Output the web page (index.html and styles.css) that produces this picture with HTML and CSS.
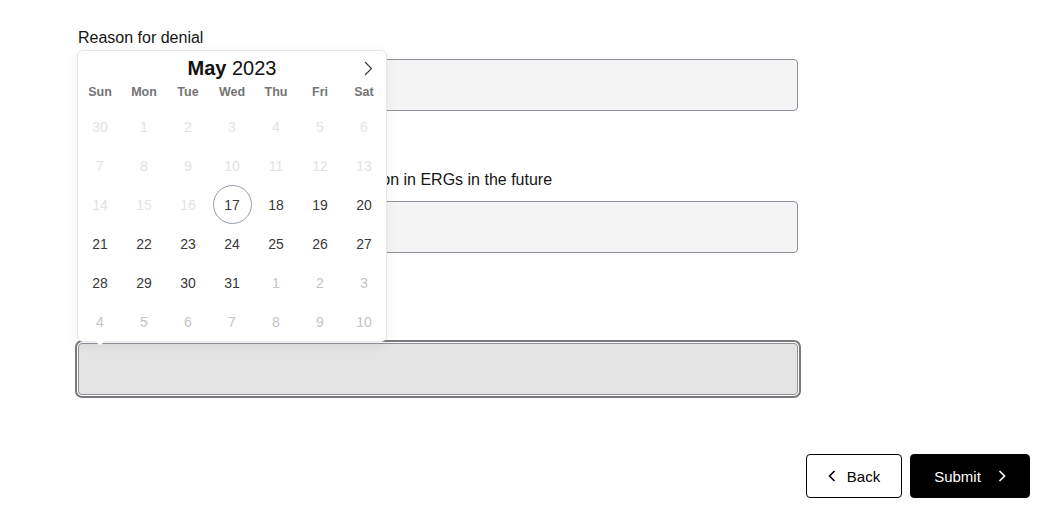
FILE: index.html
```html
<!DOCTYPE html>
<html lang="en">
  <head>
    <meta charset="UTF-8" />
    <meta name="viewport" content="width=device-width, initial-scale=1.0" />
    <title>ERG Request Review</title>
    <link rel="stylesheet" href="styles.css">
  </head>
  <body>
    <div class="form">
      <div class="field">
        <label class="field-label" for="reason">Reason for denial</label>
        <div class="field-input" id="reason"></div>
      </div>

      <div class="field">
        <label class="field-label" for="interest">Level of interest in the continued participation in ERGs in the future</label>
        <div class="field-input" id="interest"></div>
      </div>

      <div class="field">
        <label class="field-label" for="date">Date of decision</label>
        <div class="field-input field-input--active" id="date"></div>
      </div>

      <!-- date picker popup, opened above the date field -->
      <div class="calendar">
        <div class="calendar-header">
          <span class="calendar-month"><b>May</b> 2023</span>
          <span class="calendar-next">
            <svg width="9" height="15" viewBox="0 0 9 15"><path d="M1 1l6.5 6.5L1 14" fill="none" stroke="#3c3c3c" stroke-width="1.2"/></svg>
          </span>
        </div>
        <div class="calendar-weekdays">
          <span>Sun</span><span>Mon</span><span>Tue</span><span>Wed</span><span>Thu</span><span>Fri</span><span>Sat</span>
        </div>
        <div class="calendar-days">
          <span class="day disabled">30</span><span class="day disabled">1</span><span class="day disabled">2</span><span class="day disabled">3</span><span class="day disabled">4</span><span class="day disabled">5</span><span class="day disabled">6</span>
          <span class="day disabled">7</span><span class="day disabled">8</span><span class="day disabled">9</span><span class="day disabled">10</span><span class="day disabled">11</span><span class="day disabled">12</span><span class="day disabled">13</span>
          <span class="day disabled">14</span><span class="day disabled">15</span><span class="day disabled">16</span><span class="day today">17</span><span class="day">18</span><span class="day">19</span><span class="day">20</span>
          <span class="day">21</span><span class="day">22</span><span class="day">23</span><span class="day">24</span><span class="day">25</span><span class="day">26</span><span class="day">27</span>
          <span class="day">28</span><span class="day">29</span><span class="day">30</span><span class="day">31</span><span class="day other">1</span><span class="day other">2</span><span class="day other">3</span>
          <span class="day other">4</span><span class="day other">5</span><span class="day other">6</span><span class="day other">7</span><span class="day other">8</span><span class="day other">9</span><span class="day other">10</span>
        </div>
      </div>
    </div>

    <div class="actions">
      <button class="btn btn-back">
        <svg width="8" height="12" viewBox="0 0 8 12"><path d="M6.5 1L1.5 6l5 5" fill="none" stroke="#000" stroke-width="1.6"/></svg>
        Back
      </button>
      <button class="btn btn-submit">
        Submit
        <svg width="8" height="12" viewBox="0 0 8 12"><path d="M1.5 1l5 5-5 5" fill="none" stroke="#fff" stroke-width="1.6"/></svg>
      </button>
    </div>
  </body>
</html>
```

FILE: styles.css
```css
body {
  margin: 0;
  font-family: "Liberation Sans", Arial, sans-serif;
  color: #161616;
  background: #fff;
}
.form {
  position: relative;
  width: 720px;
  margin-left: 78px;
  padding-top: 28px;
}
.field {
  margin-bottom: 59px;
}
.field:last-of-type {
  margin-bottom: 0;
}
.field-label {
  display: block;
  font-size: 16px;
  line-height: 20px;
  margin-bottom: 11px;
  white-space: nowrap;
}
.field-input {
  height: 50px;
  background: #f4f4f4;
  border: 1px solid #8d939c;
  border-radius: 4px;
}
.field-input--active {
  background: #e4e4e4;
  box-shadow: 0 0 0 1px #fff, 0 0 0 3px #7a7a7a;
}

/* calendar popup */
.calendar {
  position: absolute;
  top: 51px;
  left: 0;
  width: 308px;
  height: 290px;
  background: #fff;
  border-radius: 5px;
  box-shadow: 1px 0 0 #e6e6e6, -1px 0 0 #e6e6e6, 0 1px 0 #e6e6e6, 0 -1px 0 #e6e6e6, 0 3px 13px rgba(0, 0, 0, 0.08);
}
.calendar::before,
.calendar::after {
  content: "";
  position: absolute;
  left: 17px;
  top: 100%;
  border: solid transparent;
}
.calendar::before {
  border-width: 5px;
  border-top-color: #e6e6e6;
  margin-left: 0;
}
.calendar::after {
  border-width: 4px;
  border-top-color: #fff;
  margin-left: 1px;
}
.calendar-header {
  position: relative;
  height: 34px;
  line-height: 34px;
  text-align: center;
}
.calendar-month {
  font-size: 20px;
  color: #111;
}
.calendar-next {
  position: absolute;
  right: 13px;
  top: 10px;
  line-height: 0;
}
.calendar-weekdays {
  display: grid;
  grid-template-columns: repeat(7, 44px);
  height: 14px;
  line-height: 14px;
  font-size: 12.5px;
  font-weight: bold;
  color: #757575;
  text-align: center;
}
.calendar-days {
  display: grid;
  grid-template-columns: repeat(7, 44px);
  grid-auto-rows: 39px;
  margin-top: 8px;
}
.day {
  display: flex;
  align-items: center;
  justify-content: center;
  font-size: 14px;
  color: #393939;
  border-radius: 50%;
}
.day.disabled {
  color: #e3e3e3;
}
.day.other {
  color: #c4c4c4;
}
.day.today {
  width: 37px;
  height: 37px;
  margin: 0 auto;
  border: 1px solid #959ea9;
}

/* footer buttons */
.actions {
  display: flex;
  justify-content: flex-end;
  gap: 8px;
  margin-top: 58px;
  padding-right: 26px;
}
.btn {
  display: flex;
  align-items: center;
  justify-content: center;
  height: 44px;
  font-family: inherit;
  font-size: 15px;
  border-radius: 4px;
  cursor: pointer;
}
.btn-back {
  width: 96px;
  gap: 11px;
  background: #fff;
  color: #000;
  border: 1px solid #000;
}
.btn-submit {
  width: 120px;
  gap: 17px;
  background: #000;
  color: #fff;
  border: 1px solid #000;
}
```
